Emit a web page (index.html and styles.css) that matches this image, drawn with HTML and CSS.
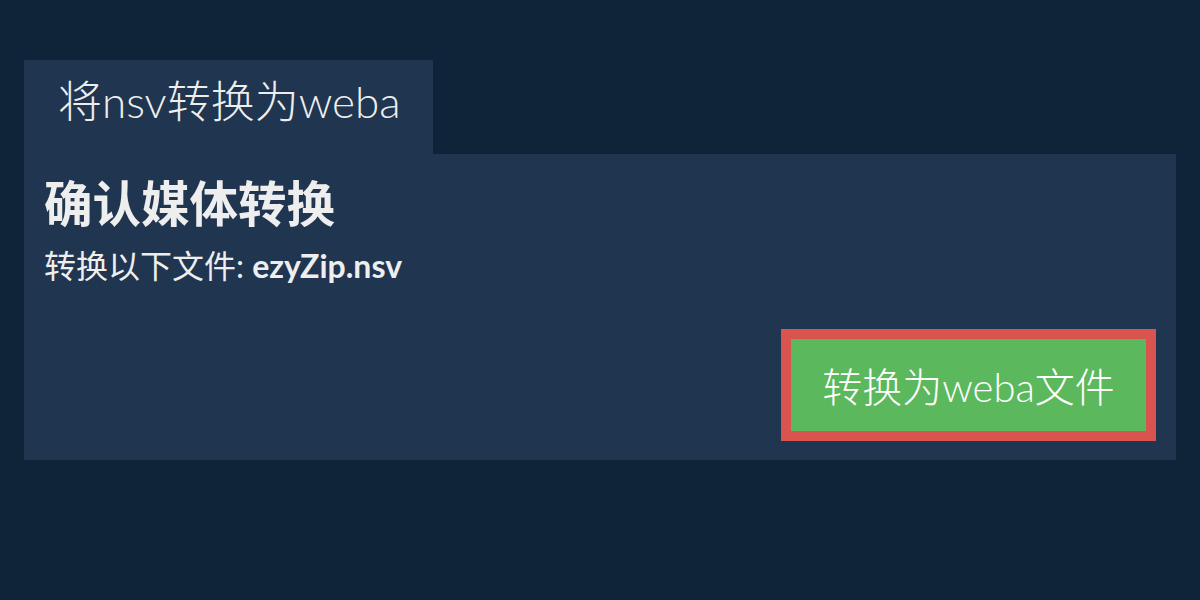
FILE: index.html
```html
<!DOCTYPE html>
<html lang="zh">
<head>
<meta charset="utf-8">
<title>将nsv转换为weba</title>
<link rel="stylesheet" href="styles.css">
</head>
<body>
<main class="page">
  <div class="tab">将nsv转换为weba</div>
  <section class="panel">
    <h1 class="title">确认媒体转换</h1>
    <p class="subtitle">转换以下文件: <strong class="file">ezyZip.nsv</strong></p>
    <div class="actions">
      <button class="convert" type="button">转换为weba文件</button>
    </div>
  </section>
</main>
</body>
</html>
```

FILE: styles.css
```css
html, body {
  margin: 0;
  padding: 0;
  background: #0f2339;
}
body {
  font-family: Lato, "Noto Sans CJK SC", sans-serif;
  color: #eeeeee;
}
.page {
  padding: 60px 24px 0 24px;
}
.tab {
  display: block;
  box-sizing: border-box;
  width: 409px;
  height: 94px;
  padding: 19px 0 0 34px;
  background: #20354f;
  font-size: 44px;
  font-weight: 300;
  line-height: 1;
  white-space: nowrap;
}
.panel {
  box-sizing: border-box;
  height: 306px;
  background: #20354f;
  padding: 20px 20px 19px 20px;
  display: flex;
  flex-direction: column;
}
.title {
  margin: 0;
  font-size: 48.5px;
  font-weight: 700;
  line-height: 1.2;
}
.subtitle {
  margin: 15px 0 0 0;
  font-size: 32px;
  line-height: 1.2;
}
.file {
  font-weight: 700;
}
.actions {
  margin-top: auto;
  display: flex;
  justify-content: flex-end;
}
.convert {
  box-sizing: border-box;
  width: 375px;
  height: 112px;
  border: 10px solid #d9534f;
  background: #5cb85c;
  color: #ffffff;
  font-family: Lato, "Noto Sans CJK SC", sans-serif;
  font-size: 40px;
  font-weight: 300;
  padding: 0;
  cursor: pointer;
}
```
